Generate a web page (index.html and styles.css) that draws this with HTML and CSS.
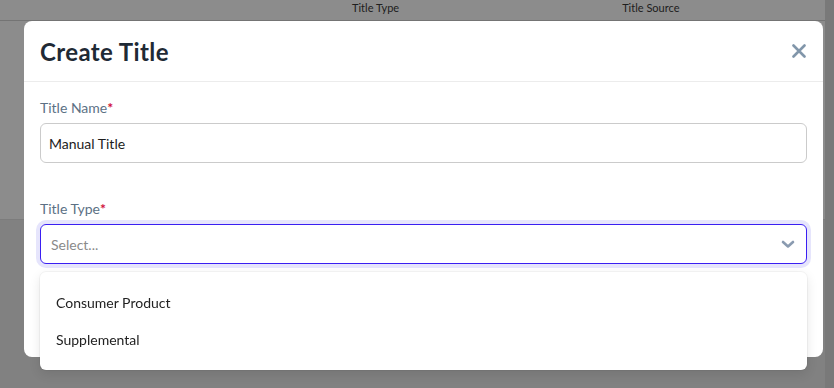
FILE: index.html
```html
<!DOCTYPE html>
<html lang="en">
<head>
  <meta charset="UTF-8" />
  <meta name="viewport" content="width=device-width, initial-scale=1.0"/>
  <title>Create Title</title>
  <link rel="stylesheet" href="styles.css">
</head>
<body>
  <div class="page">
    <div class="page-main">
      <div class="table-card">
        <div class="table-head">
          <div class="th th-type">Title Type</div>
          <div class="th th-source">Title Source</div>
        </div>
      </div>
    </div>
    <div class="page-rail"></div>
  </div>

  <div class="overlay">
    <div class="modal">
      <div class="modal-header">
        <h1>Create Title</h1>
        <button class="close-button" aria-label="Close">
          <svg width="14" height="14" viewBox="0 0 14 14">
            <path d="M1.5 1.5 L12.5 12.5 M12.5 1.5 L1.5 12.5" stroke="currentColor" stroke-width="2.6" stroke-linecap="round" fill="none"/>
          </svg>
        </button>
      </div>
      <div class="modal-body">
        <div class="field">
          <label class="field-label">Title Name<span class="required">*</span></label>
          <div class="text-input">Manual Title</div>
        </div>
        <div class="field">
          <label class="field-label">Title Type<span class="required">*</span></label>
          <div class="select-wrap">
            <div class="select-control">
              <span class="placeholder">Select...</span>
              <svg class="chevron" width="14" height="9" viewBox="0 0 14 9">
                <path d="M2 2 L7 6.5 L12 2" stroke="currentColor" stroke-width="2.6" stroke-linecap="round" stroke-linejoin="round" fill="none"/>
              </svg>
            </div>
            <div class="select-menu">
              <div class="option">Consumer Product</div>
              <div class="option">Supplemental</div>
            </div>
          </div>
        </div>
      </div>
    </div>
  </div>
</body>
</html>
```

FILE: styles.css
```css
* {
  box-sizing: border-box;
}

body {
  margin: 0;
  font-family: Lato, 'Open Sans', sans-serif;
  background: #ebebeb;
  height: 388px;
  overflow: hidden;
}

/* page behind the modal */
.page {
  display: flex;
  height: 388px;
}

.page-main {
  flex: 1;
}

.page-rail {
  width: 9px;
  background: #dcdcdc;
}

.table-card {
  background: #fff;
  height: 220px;
  border-bottom: 1px solid #e2e2e2;
}

.table-head {
  display: flex;
  height: 21px;
  padding-top: 1px;
  border-bottom: 1px solid #d4d4d4;
  font-size: 11px;
  line-height: 13px;
  color: #3a3a3a;
}

.th-type {
  margin-left: 352px;
}

.th-source {
  margin-left: 223px;
}

/* modal */
.overlay {
  position: fixed;
  inset: 0;
  background: rgba(0, 0, 0, 0.45);
  padding: 21px 11px 0 24px;
}

.modal {
  width: 799px;
  background: #fff;
  border-radius: 8px;
}

.modal-header {
  display: flex;
  align-items: center;
  justify-content: space-between;
  height: 61px;
  padding: 0 16px;
  border-bottom: 1px solid #ececec;
}

.modal-header h1 {
  margin: 0;
  font-size: 24px;
  font-weight: 700;
  color: #1f2a35;
  letter-spacing: 0.4px;
}

.close-button {
  border: none;
  background: none;
  padding: 0;
  margin-right: 1px;
  color: #8196aa;
  display: flex;
}

.modal-body {
  padding: 16px 16px 93px;
}

.field + .field {
  margin-top: 36px;
}

.field-label {
  display: block;
  font-size: 14px;
  line-height: 20px;
  color: #5c7185;
  margin-bottom: 5px;
}

.required {
  color: #d0103a;
  font-weight: 700;
}

.text-input {
  height: 40px;
  border: 1px solid #cbcbcb;
  border-radius: 6px;
  padding: 0 8px;
  display: flex;
  align-items: center;
  font-size: 14px;
  color: #1c1c1c;
}

.select-wrap {
  position: relative;
}

.select-control {
  height: 40px;
  border: 1px solid #3a1ff2;
  border-radius: 6px;
  box-shadow: 0 0 0 4px #e6e5fc;
  padding: 0 11px 0 10px;
  display: flex;
  align-items: center;
  justify-content: space-between;
  font-size: 14px;
}

.placeholder {
  color: #8a8a8a;
}

.chevron {
  color: #8a9bb0;
}

.select-menu {
  position: absolute;
  top: 48px;
  left: 0;
  right: 0;
  background: #fff;
  border-radius: 6px;
  padding: 12px 0;
  box-shadow: 0 0 0 1px rgba(0, 0, 0, 0.04), 0 4px 12px rgba(0, 0, 0, 0.1);
}

.option {
  padding: 8px 16px;
  font-size: 14px;
  line-height: 21px;
  color: #222;
}
```
